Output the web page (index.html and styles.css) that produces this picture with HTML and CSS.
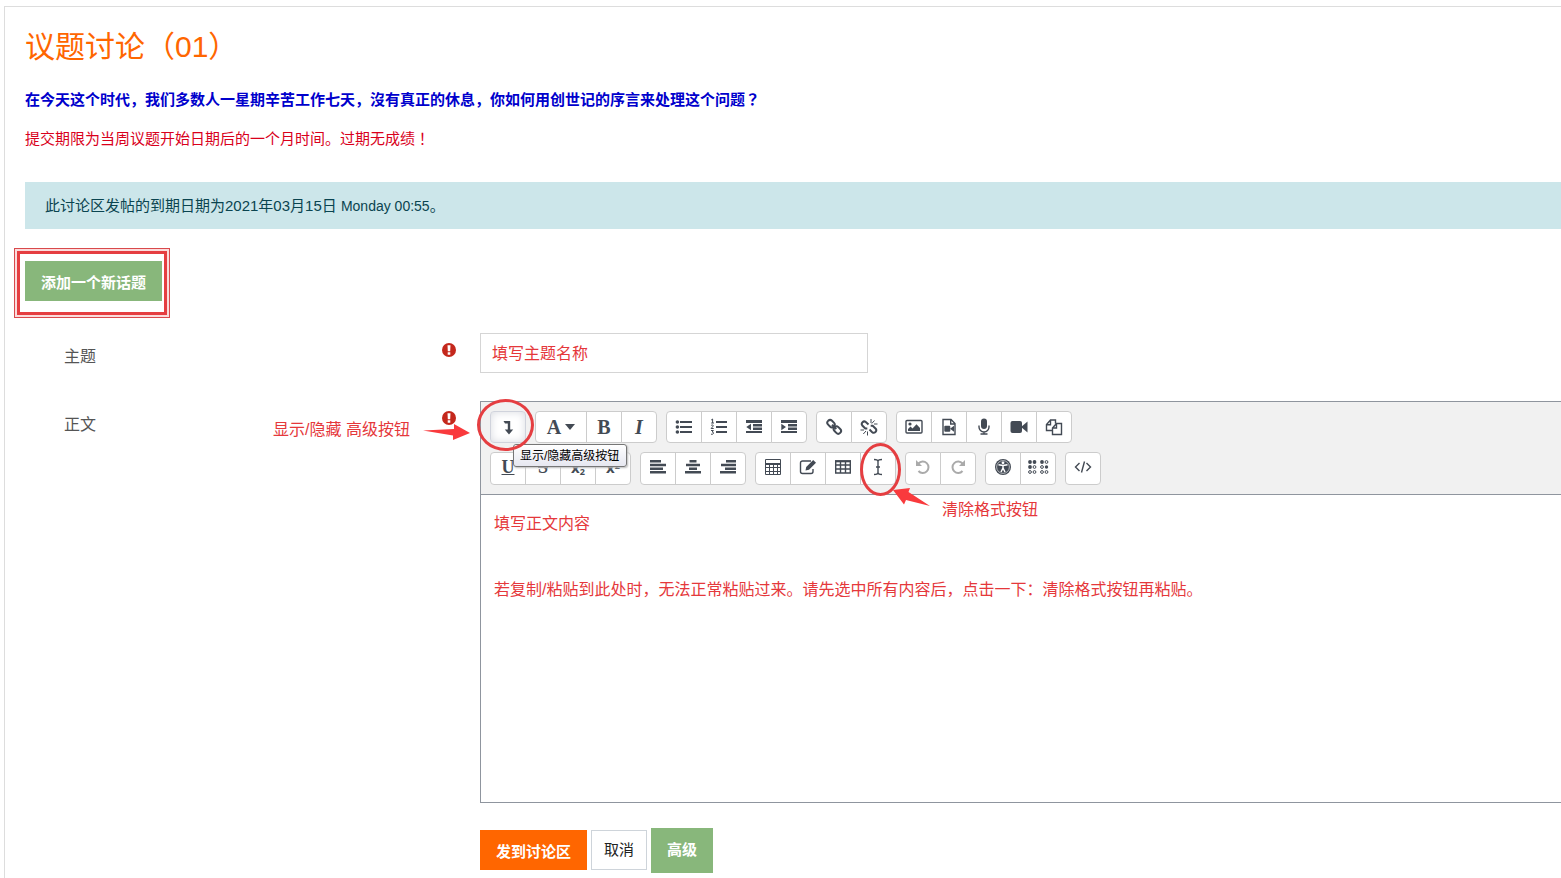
FILE: index.html
```html
<!DOCTYPE html>
<html lang="zh-CN">
<head>
<meta charset="utf-8">
<title>议题讨论（01）</title>
<link rel="stylesheet" href="styles.css">
</head>
<body>
<main class="panel">
  <h1 class="title">议题讨论（01）</h1>
  <p class="question">在今天这个时代，我们多数人一星期辛苦工作七天，沒有真正的休息，你如何用创世记的序言来处理这个问题<span lang="zh-TW">？</span></p>
  <p class="deadline">提交期限为当周议题开始日期后的一个月时间。过期无成绩<span lang="zh-TW">！</span></p>
  <div class="notice">此讨论区发帖的到期日期为2021年03月15日 <span class="notice-time">Monday 00:55</span>。</div>
  <div class="add-topic">
    <button type="button" class="btn btn-green">添加一个新话题</button>
    <span class="add-frame"></span>
  </div>

  <form class="form">
    <div class="row row-subject">
      <div class="label-cell">
        <label for="subject">主题</label>
        <svg class="required" viewBox="0 0 14 14"><circle cx="7" cy="7" r="7" fill="#c4281c"/><path d="M5.500 2.200h3L8.200 8.300H5.800zM5.700 9.300h2.600v2.500H5.700z" fill="#fff"/></svg>
      </div>
      <input id="subject" class="subject" type="text" value="填写主题名称">
    </div>

    <div class="row">
      <div class="label-cell">
        <label for="message">正文</label>
        <svg class="required" viewBox="0 0 14 14"><circle cx="7" cy="7" r="7" fill="#c4281c"/><path d="M5.500 2.200h3L8.200 8.300H5.800zM5.700 9.300h2.600v2.500H5.700z" fill="#fff"/></svg>
      </div>
      <div class="editor">
        <div class="toolbar">
          <div class="tool-row">
            <div class="group">
              <button type="button" class="tool tool-active" aria-label="显示/隐藏高级按钮"><svg viewBox="0 0 18 18"><path d="M4.500 3h6.700v8.500h3L10 16.500 5.800 11.500h3V5.500H6z"/></svg></button>
            </div>
            <div class="group">
              <button type="button" class="tool tool-wide glyph" aria-label="段落样式">A<svg class="caret" viewBox="0 0 10 6"><path d="M0 0h10L5 6z"/></svg></button>
              <button type="button" class="tool glyph">B</button>
              <button type="button" class="tool glyph italic">I</button>
            </div>
            <div class="group">
              <button type="button" class="tool" aria-label="无序列表"><svg viewBox="0 0 18 18"><circle cx="2.400" cy="4" r="1.800"/><circle cx="2.400" cy="9" r="1.800"/><circle cx="2.400" cy="14" r="1.800"/><path d="M5 3h12v2H5zM5 8h12v2H5zM5 13h12v2H5z"/></svg></button>
              <button type="button" class="tool" aria-label="有序列表"><svg viewBox="0 0 18 18"><path d="M6 3h11v2H6zM6 8h11v2H6zM6 13h11v2H6z"/><path d="M1.200 2 2.600 1v4M1.200 5H4M1 7.700C1.800 6.600 3.500 6.800 3.300 8c0 .8-2 1.400-2.200 2.500h2.600M1 12.500h2.400L2.200 14c2 0 2 2.800-1.200 2.200" class="line"/></svg></button>
              <button type="button" class="tool" aria-label="减少缩进"><svg viewBox="0 0 18 18"><path d="M1 2h16v3H1zM8 6h9v2.400H8zM8 9.600h9V12H8zM1 13h16v2H1zM1.300 9 6 5.800v6.400z"/></svg></button>
              <button type="button" class="tool" aria-label="增加缩进"><svg viewBox="0 0 18 18"><path d="M1 2h16v3H1zM8 6h9v2.400H8zM8 9.600h9V12H8zM1 13h16v2H1zM6 9 1.300 5.800v6.400z"/></svg></button>
            </div>
            <div class="group">
              <button type="button" class="tool" aria-label="链接"><svg viewBox="0 0 18 18"><g transform="rotate(45 9 9)" class="thick"><rect x="0.500" y="6" width="8" height="5.500" rx="2.700"/><rect x="9.500" y="6" width="8" height="5.500" rx="2.700"/><path d="M6 8.800h6"/></g></svg></button>
              <button type="button" class="tool" aria-label="取消链接"><svg viewBox="0 0 18 18"><path class="thick" d="M8.500 6.500 5.800 4a2.500 2.500 0 0 0-3.500 3.500l3 3h2M9.500 11.500l2.700 2.700a2.500 2.500 0 0 0 3.500-3.500l-3-3h-2"/><path class="line" d="M11 1v4M14.500 2.500l-2.700 3M17.500 6H14M.5 12H4M6 13l-2.700 3M7.500 13.500v4"/></svg></button>
            </div>
            <div class="group">
              <button type="button" class="tool" aria-label="图像"><svg viewBox="0 0 18 18"><rect x="1" y="2.500" width="16" height="12.500" rx="1" class="mid"/><circle cx="5" cy="6" r="1.600"/><path d="M3 13v-2l2.500-2.500 2 2 4-4.300 3.500 3.800v3z"/></svg></button>
              <button type="button" class="tool" aria-label="媒体"><svg viewBox="0 0 18 18"><path class="mid" d="M3 1.500h8l4 4v11H3zM10.700 1.500v4.500H15"/><rect x="4.300" y="7.800" width="6" height="6" rx="1"/><path d="m10 10.800 4-3v6l-4-3z"/></svg></button>
              <button type="button" class="tool" aria-label="录音"><svg viewBox="0 0 18 18"><rect x="6" y="0.500" width="6" height="10.500" rx="3"/><path class="mid" d="M4 7.500v1.500a5 5 0 0 0 10 0V7.500M9 14v2.500M5.500 16h7"/></svg></button>
              <button type="button" class="tool" aria-label="录像"><svg viewBox="0 0 18 18"><rect x="0.500" y="3" width="11.500" height="12" rx="2"/><path d="m11 9 6.500-5.500v11L11 9z"/></svg></button>
              <button type="button" class="tool" aria-label="管理文件"><svg viewBox="0 0 18 18"><path class="mid" d="M7 12.500H1.500V6.500L5.500 2h5v3.500M5.500 2v4.700H1.500M7.500 10l4-4.500h5v11h-9zM11.500 5.500V10h-4"/></svg></button>
            </div>
          </div>
          <div class="tool-row tool-row-lower">
            <div class="group">
              <button type="button" class="tool glyph underline">U</button>
              <button type="button" class="tool glyph strike">S</button>
              <button type="button" class="tool glyph-sans">x<sub>2</sub></button>
              <button type="button" class="tool glyph-sans">x<sup>2</sup></button>
            </div>
            <div class="group">
              <button type="button" class="tool" aria-label="左对齐"><svg viewBox="0 0 18 18"><path d="M1 2h11v2.400H1zM1 5.800h16v2.400H1zM1 9.500h13v2.400H1zM1 13h16v2.400H1z"/></svg></button>
              <button type="button" class="tool" aria-label="居中"><svg viewBox="0 0 18 18"><path d="M5.500 2h7v2.400h-7zM2 5.800h14v2.400H2zM5 9.500h8v2.400H5zM1 13h16v2.400H1z"/></svg></button>
              <button type="button" class="tool" aria-label="右对齐"><svg viewBox="0 0 18 18"><path d="M7 2h10v2.400H7zM2 5.800h15v2.400H2zM6 9.500h11v2.400H6zM1 13h16v2.400H1z"/></svg></button>
            </div>
            <div class="group">
              <button type="button" class="tool" aria-label="公式"><svg viewBox="0 0 18 18"><path class="line" d="M1.500 1.500h15v15h-15zM1.500 6.500h15M1.500 9.500h15M1.500 13.500h15M5.500 6.500v10M9.500 6.500v10M13.500 6.500v10M1.500 5.500h15"/></svg></button>
              <button type="button" class="tool" aria-label="编辑"><svg viewBox="0 0 18 18"><path class="mid" d="M12 3H3.500A2 2 0 0 0 1.500 5v8.500a2 2 0 0 0 2 2H12a2 2 0 0 0 2-2V11"/><path d="m6.500 12.500.7-3.500 7-7 2.800 2.800-7 7z"/></svg></button>
              <button type="button" class="tool" aria-label="表格"><svg viewBox="0 0 18 18"><path class="mid" d="M1.700 3h14.600v12H1.700zM1.700 7h14.600M1.700 11h14.600M6.500 3v12M11.500 3v12"/><path d="M1 2.300h16v2H1z"/></svg></button>
              <button type="button" class="tool" aria-label="清除格式"><svg viewBox="0 0 18 18"><path class="mid" d="M5 1.500c2.500 0 4 .5 4 2 0-1.500 1.500-2 4-2M9 3.500v11M5 16.500c2.500 0 4-.5 4-2 0 1.500 1.500 2 4 2M7 9h4"/></svg></button>
            </div>
            <div class="group">
              <button type="button" class="tool tool-off" aria-label="撤消"><svg viewBox="0 0 18 18"><path class="thick" d="M4.500 5.500a5.700 5.700 0 1 1 0 7.500"/><path d="M2 2v6h6z"/></svg></button>
              <button type="button" class="tool tool-off" aria-label="重做"><svg viewBox="0 0 18 18"><path class="thick" d="M13.500 5.500a5.700 5.700 0 1 0 0 7.500"/><path d="M16 2v6h-6z"/></svg></button>
            </div>
            <div class="group">
              <button type="button" class="tool" aria-label="无障碍检查"><svg viewBox="0 0 18 18"><circle cx="9" cy="9" r="8"/><circle cx="9" cy="9" r="6.400" fill="none" stroke="#fff" stroke-width=".6"/><circle cx="9" cy="4.800" r="1.400" fill="#fff"/><path d="m4.500 6.800 4.500.8 4.500-.8M9 8v2.500M9 10l-2 4M9 10l2 4" fill="none" stroke="#fff" stroke-width="1.500"/></svg></button>
              <button type="button" class="tool" aria-label="屏幕阅读助手"><svg class="braille" viewBox="0 0 22 16"><g><circle cx="3" cy="3" r="1.900"/><circle cx="7.500" cy="3" r="1.900"/><circle cx="3" cy="8" r="1.900"/><circle cx="15" cy="3" r="1.900"/><circle cx="19.500" cy="8" r="1.700"/></g><g class="line"><circle cx="7.500" cy="8" r="1.400"/><circle cx="3" cy="13" r="1.400"/><circle cx="7.500" cy="13" r="1.400"/><circle cx="19.500" cy="3" r="1.400"/><circle cx="15" cy="8" r="1.400"/><circle cx="15" cy="13" r="1.400"/><circle cx="19.500" cy="13" r="1.400"/></g></svg></button>
            </div>
            <div class="group">
              <button type="button" class="tool" aria-label="HTML"><svg viewBox="0 0 18 18"><path class="mid" d="M5.500 5 1.500 9l4 4M12.500 5l4 4-4 4M10.500 3.500l-3 11"/></svg></button>
            </div>
          </div>
        </div>
        <textarea id="message" class="message">填写正文内容

若复制/粘贴到此处时，无法正常粘贴过来。请先选中所有内容后，点击一下：清除格式按钮再粘贴。</textarea>

        <div class="tooltip" role="tooltip">显示/隐藏高级按钮</div>
        <span class="ring ring-toggle"></span>
        <span class="ring ring-clear"></span>
        <span class="hint hint-toggle">显示/隐藏 高级按钮</span>
        <svg class="arrow arrow-toggle" viewBox="0 0 48 16"><path d="M0 6.500 31 5V0l16 9-17 7v-4.500z"/></svg>
        <svg class="arrow arrow-clear" viewBox="0 0 38 18"><path d="M0 2 17 0l-1.500 4L37 18 13 12l-2 4.500z"/></svg>
        <span class="hint hint-clear">清除格式按钮</span>
      </div>
    </div>

    <div class="actions">
      <button type="button" class="btn btn-orange">发到讨论区</button>
      <button type="button" class="btn btn-plain">取消</button>
      <button type="button" class="btn btn-green btn-tall">高级</button>
    </div>
  </form>
</main>
</body>
</html>
```
FILE: styles.css
```css
* { box-sizing: border-box; }

body {
  margin: 0;
  background: #fff;
  color: #555;
  font: 15px/24px "Liberation Sans", "Noto Sans CJK SC", sans-serif;
  overflow: hidden;
}

.panel {
  margin: 6px 0 0 4px;
  padding: 20px 0 0 20px;
  border: solid #ddd;
  border-width: 1px 0 0 1px;
  min-height: calc(100vh - 6px);
}

.title {
  margin: 0;
  color: #f60;
  font-size: 30px;
  font-weight: 400;
  line-height: 40px;
}

.question,
.deadline { margin: 0; }

.question {
  padding-top: 21px;
  color: #00c;
  font-weight: 700;
}

.deadline {
  padding-top: 15px;
  color: #d9001b;
}

.notice {
  margin-top: 31px;
  padding: 12px 20px 11px;
  background: #cce6ea;
  color: #0a4450;
}

.notice-time { font-size: 14px; }

.add-topic {
  position: relative;
  display: flex;
  width: max-content;
  margin-top: 32px;
}

.add-frame {
  position: absolute;
  inset: -13px -8px -17px -11px;
  border: 1px solid #d9494c;
  box-shadow: inset 0 0 0 2px #fbdcdc, inset 0 0 0 5px #e53e41;
  pointer-events: none;
}

.btn {
  height: 40px;
  padding: 3px 16px 0;
  border: 0;
  color: #fff;
  font: 700 15px/24px "Liberation Sans", "Noto Sans CJK SC", sans-serif;
}

.btn-green { background: #88b77b; }
.btn-orange { background: #f60; }

.btn-plain {
  padding: 0 12px;
  border: 1px solid #ced4da;
  background: #fff;
  color: #222;
  font-weight: 400;
}

.btn-tall {
  height: 45px;
  padding: 0 16px 2px;
}

.form { margin-top: 32px; }

.row {
  display: grid;
  grid-template-columns: 455px minmax(0, 1fr);
}

.row-subject { margin-bottom: 28px; }

.label-cell {
  display: flex;
  justify-content: space-between;
  align-items: flex-start;
  padding: 10px 24px 0 39px;
  font-size: 16px;
  line-height: 28px;
}

.required {
  width: 14px;
  height: 14px;
}

.subject {
  width: 388px;
  height: 40px;
  padding: 0 11px 2px;
  border: 1px solid #d5d5d5;
  color: #e5383b;
  font: 16px "Liberation Sans", "Noto Sans CJK SC", sans-serif;
}

.editor {
  position: relative;
  border: 1px solid #8f959e;
  border-right: 0;
}

.toolbar {
  display: flex;
  flex-direction: column;
  gap: 9px;
  padding: 9px;
  border-bottom: 1px solid #8f959e;
  background: #f1f1f1;
}

.tool-row,
.group { display: flex; }

.tool-row { gap: 9px; }

.tool {
  display: flex;
  align-items: center;
  justify-content: center;
  width: 36px;
  height: 32px;
  padding: 0;
  border: 1px solid #ccc;
  background: #fff;
  color: #434a54;
}

.tool-row-lower .tool {
  height: 33px;
  padding-bottom: 3px;
}

.tool + .tool { margin-left: -1px; }
.tool:first-child { border-radius: 4px 0 0 4px; }
.tool:last-child { border-radius: 0 4px 4px 0; }
.tool:only-child { border-radius: 4px; }

.tool svg {
  width: 18px;
  height: 18px;
  fill: currentColor;
}

.tool .braille { width: 22px; height: 16px; }
.tool .caret { width: 10px; height: 6px; }

.tool .line,
.tool .mid,
.tool .thick {
  fill: none;
  stroke: currentColor;
  stroke-width: 1;
}

.tool .mid { stroke-width: 1.4; }
.tool .thick { stroke-width: 2; }

.tool-active {
  background: #fff;
  border-color: #d0d3dc;
  box-shadow: inset 0 0 8px #d8dae0;
}

.tool-wide { width: 52px; gap: 4px; }
.tool-off { color: #aaa; }

.glyph { font: 700 20px/24px "Liberation Serif", serif; }
.italic { font-style: italic; }
.underline { text-decoration: underline; font-size: 18px; }
.strike { text-decoration: line-through; font-size: 18px; }
.glyph-sans { font: 700 15px/20px "Open Sans", sans-serif; }

.glyph-sans sub,
.glyph-sans sup {
  font-size: 9px;
  line-height: 9px;
}

.glyph-sans sub { align-self: flex-end; padding-bottom: 5px; }
.glyph-sans sup { align-self: flex-start; padding-top: 8px; }

.message {
  display: block;
  width: 100%;
  height: 307px;
  padding: 12px 13px;
  border: 0;
  outline: 0;
  resize: none;
  color: #e5383b;
  font: 16px/33px "Liberation Sans", "Noto Sans CJK SC", sans-serif;
}

.tooltip {
  position: absolute;
  top: 42px;
  left: 32px;
  padding: 1px 7px 0 6px;
  border: 1px solid #767676;
  border-radius: 3px;
  background: linear-gradient(#fff, #e6e7f0);
  box-shadow: 1px 1px 2px #bbb;
  color: #000;
  font-size: 12px;
  line-height: 20px;
  white-space: nowrap;
}

.ring {
  position: absolute;
  border: 3px solid #e53e41;
  border-radius: 50%;
  pointer-events: none;
}

.ring-toggle {
  top: -3px;
  left: -4px;
  width: 57px;
  height: 52px;
}

.ring-clear {
  top: 41px;
  left: 379px;
  width: 41px;
  height: 53px;
}

.hint {
  position: absolute;
  color: #e5383b;
  font-size: 16px;
  line-height: 24px;
  white-space: nowrap;
}

.hint-toggle { top: 16px; left: -208px; }
.hint-clear { top: 96px; left: 461px; }

.arrow {
  position: absolute;
  fill: #f93a3d;
}

.arrow-toggle {
  top: 22px;
  left: -58px;
  width: 48px;
  height: 16px;
}

.arrow-clear {
  top: 86px;
  left: 412px;
  width: 38px;
  height: 18px;
}

.actions {
  display: flex;
  align-items: flex-start;
  gap: 4px;
  margin: 25px 0 0 455px;
}

.btn-orange,
.btn-plain { margin-top: 2px; }
```
